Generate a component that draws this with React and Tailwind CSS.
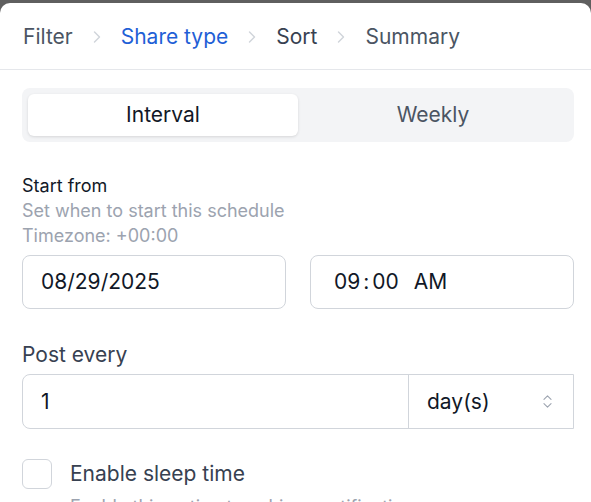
import React from "react";
import { ChevronRight, ChevronsUpDown } from "lucide-react";

export default function App() {
  const font = { fontFamily: "Inter, 'Noto Sans', sans-serif" };
  return (
    <div className="w-[591px] h-[502px] overflow-hidden bg-[#5f5f5f] pt-[3px]" style={font}>
      <div className="bg-white rounded-t-[10px] h-[499px]">
        <div className="flex items-center h-[67px] pt-[2px] pl-[23px] border-b border-[#e5e7eb] text-[21px]">
          <span className="text-[#4b5563]">Filter</span>
          <ChevronRight className="mx-[14px] text-[#d1d5db]" size={20} strokeWidth={1.75} />
          <span className="text-[#1f5fd6]">Share type</span>
          <ChevronRight className="mx-[14px] text-[#d1d5db]" size={20} strokeWidth={1.75} />
          <span className="text-[#374151]">Sort</span>
          <ChevronRight className="mx-[14px] text-[#d1d5db]" size={20} strokeWidth={1.75} />
          <span className="text-[#4b5563]">Summary</span>
        </div>
        <div className="pl-[22px] pr-[17px] pt-[18px]">
          <div className="flex h-[54px] p-[6px] rounded-lg bg-[#f3f4f6]">
            <div className="flex-1 flex items-center justify-center rounded-md bg-white shadow-[0_1px_3px_rgba(0,0,0,0.12)] text-[21px] text-[#111827]">
              Interval
            </div>
            <div className="flex-1 flex items-center justify-center text-[21px] text-[#4b5563]">
              Weekly
            </div>
          </div>

          <div className="mt-[31px] text-[18px] leading-[25px]">
            <div className="text-[#111827]">Start from</div>
            <div className="text-[#9ca3af]">Set when to start this schedule</div>
            <div className="text-[#9ca3af]">Timezone: +00:00</div>
          </div>

          <div className="mt-[7px] grid grid-cols-2 gap-[24px]">
            <div className="h-[54px] flex items-center px-[18px] border border-[#d1d5db] rounded-lg text-[21px] text-[#111827]">
              08/29/2025
            </div>
            <div className="h-[54px] flex items-center px-[23px] border border-[#d1d5db] rounded-lg text-[21px] text-[#111827]">
              <span>09</span>
              <span className="mx-[3px]">:</span>
              <span>00</span>
              <span className="ml-[15px]">AM</span>
            </div>
          </div>

          <div className="mt-[32px] text-[21px] leading-[28px] text-[#374151]">Post every</div>

          <div className="mt-[5px] flex h-[55px] border border-[#d1d5db] rounded-l-lg">
            <div className="flex-1 flex items-center px-[18px] text-[21px] text-[#111827]">1</div>
            <div className="w-[165px] flex items-center justify-between border-l border-[#d1d5db] pl-[18px] pr-[17px] text-[21px] text-[#111827]">
              <span>day(s)</span>
              <ChevronsUpDown size={17} strokeWidth={1.5} className="text-[#9ca3af]" />
            </div>
          </div>

          <div className="mt-[29px] flex items-center gap-[18px]">
            <div className="w-[30px] h-[30px] rounded-md border border-[#d1d5db] bg-white"></div>
            <span className="text-[21px] text-[#374151]">Enable sleep time</span>
          </div>
          <div className="pl-[48px] mt-[4px] text-[18px] leading-[25px] text-[#9ca3af] whitespace-nowrap">
            Enable this option to achieve notifications
          </div>
        </div>
      </div>
    </div>
  );
}
